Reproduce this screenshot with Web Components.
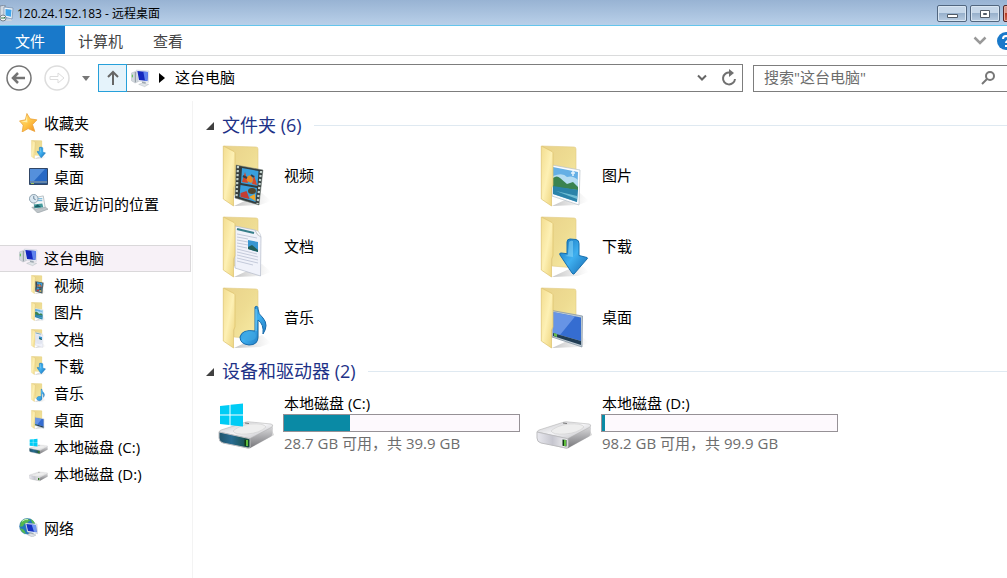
<!DOCTYPE html>
<html lang="zh-CN">
<head>
<meta charset="UTF-8">
<title>120.24.152.183 - 远程桌面</title>
<style>
    html, body {
        margin: 0;
        height: 100%;
    }

    body {
        font-family: "Open Sans", "Noto Sans CJK SC", sans-serif;
        font-size: 15px;
        color: #000;
        background: #fff;
        overflow-x: hidden;
    }
</style>
</head>
<body>
<explorer-window>
    <title-bar slot="title">120.24.152.183 - 远程桌面</title-bar>
    <ribbon-tabs slot="ribbon"></ribbon-tabs>
    <address-bar slot="address" location="这台电脑"></address-bar>

    <tree-item slot="tree" icon="star">收藏夹</tree-item>
    <tree-item slot="tree" icon="download" child>下载</tree-item>
    <tree-item slot="tree" icon="screen" child>桌面</tree-item>
    <tree-item slot="tree" icon="recent" child>最近访问的位置</tree-item>
    <tree-item slot="tree" icon="computer" group selected>这台电脑</tree-item>
    <tree-item slot="tree" icon="video" child>视频</tree-item>
    <tree-item slot="tree" icon="picture" child>图片</tree-item>
    <tree-item slot="tree" icon="document" child>文档</tree-item>
    <tree-item slot="tree" icon="download" child>下载</tree-item>
    <tree-item slot="tree" icon="music" child>音乐</tree-item>
    <tree-item slot="tree" icon="desktop" child>桌面</tree-item>
    <tree-item slot="tree" icon="drive-c" child>本地磁盘 (C:)</tree-item>
    <tree-item slot="tree" icon="drive-d" child>本地磁盘 (D:)</tree-item>
    <tree-item slot="tree" icon="network" group>网络</tree-item>

    <item-group heading="文件夹 (6)">
        <folder-tile icon="video">视频</folder-tile>
        <folder-tile icon="picture">图片</folder-tile>
        <folder-tile icon="document">文档</folder-tile>
        <folder-tile icon="download">下载</folder-tile>
        <folder-tile icon="music">音乐</folder-tile>
        <folder-tile icon="desktop">桌面</folder-tile>
    </item-group>
    <item-group heading="设备和驱动器 (2)">
        <drive-tile icon="drive-c" used="28">本地磁盘 (C:)<span slot="space">28.7 GB 可用，共 39.9 GB</span></drive-tile>
        <drive-tile icon="drive-d" used="1">本地磁盘 (D:)<span slot="space">98.2 GB 可用，共 99.9 GB</span></drive-tile>
    </item-group>
</explorer-window>

<script>
    // Every folder shares the same back panel and front flap
    const folder = (content) => `
        <defs>
            <linearGradient id="back" x1="0" x2="1" y1="0" y2="1">
                <stop offset="0" stop-color="#e9d28a"/><stop offset=".5" stop-color="#eedc92"/><stop offset="1" stop-color="#f8eca6"/>
            </linearGradient>
            <linearGradient id="flap" x1="0" x2="1" y1="0" y2="1">
                <stop offset="0" stop-color="#f3dd90"/><stop offset=".5" stop-color="#fdf0b4"/><stop offset="1" stop-color="#ecd27a"/>
            </linearGradient>
            <linearGradient id="blue" x1="0" x2="1" y1="0" y2="1">
                <stop offset="0" stop-color="#1470b8"/><stop offset=".5" stop-color="#3fb0f0"/><stop offset="1" stop-color="#1668b0"/>
            </linearGradient>
            <linearGradient id="shade"><stop offset="0" stop-color="#888" stop-opacity=".5"/><stop offset="1" stop-color="#aaa" stop-opacity="0"/></linearGradient>
        </defs>
        <path d="M12 61 40 48 49 56 38 60z" fill="url(#shade)"/>
        <path d="M2 1 34 2q2 0 2 2V52L12 50V8z" fill="url(#back)" stroke="#e0cb84" stroke-width=".6"/>
        ${content}
        <path d="M1.300 1 12 6.500q1 .6 1 2V40l-1.500 3V61L1.300 54z" fill="url(#flap)" stroke="#dcc26c" stroke-width=".7"/>`;

    const drive = (front, content) => `
        <defs>
            <linearGradient id="top" x1="0" x2="1" y1="0" y2="1"><stop offset="0" stop-color="#c4c4c8"/><stop offset=".5" stop-color="#f5f5f7"/><stop offset="1" stop-color="#b8b8bc"/></linearGradient>
            <linearGradient id="side" x1="0" x2="0" y1="0" y2="1"><stop offset="0" stop-color="#dcdcde"/><stop offset="1" stop-color="#77777b"/></linearGradient>
            <linearGradient id="front">${front}</linearGradient>
        </defs>
        <path d="M3 39 31 46 56 32 54 27z" fill="#999" opacity=".4"/>
        <path d="M31 35 54 23q1 0 1 2l-1 7q0 1-2 2L32 45z" fill="url(#side)"/>
        <path d="M1 29q0-1 2-2L28 19q2-.6 5 0l20 2q3 .5 1 3L33 35q-1 1-3 .5z" fill="url(#top)" stroke="#aaa" stroke-width=".5"/>
        <path d="M15 28Q20 23 32 21 46 20 48 24 42 30 29 31 17 32 15 28z" fill="#eee" stroke="#ccc" stroke-width=".6"/>
        <path d="M27 20 31 20.500" stroke="#777" stroke-width="1.200"/>
        <path d="M1 29 31 35.500q1 .5 1 2V44q0 1-2 1L5 40q-4-1-4-5z" fill="url(#front)" stroke="#bdbdc0"/>
        <path d="M26.500 36.500 30.500 37v6.500l-4-.7z" fill="#103a16"/><path d="M29 37v6" stroke="#7bea4a" stroke-width="1.500"/>
        ${content}`;

    const icons = {
        video: ['0 0 49 62', folder(`
            <path d="M14 20 41 25 37 60 13 53z" fill="#333b3c" stroke="#76837d" stroke-width=".5"/>
            <path d="M16 21 14.500 53M39 26 35.500 59" stroke="#c3d2cc" stroke-width="2.200" stroke-dasharray="2.200 1.800"/>
            <path d="M20 23 36.500 26 35.500 41 19 38z" fill="#389fdd"/><path d="M18.500 40 35 43 33.500 57 17.500 52z" fill="#389fdd"/>
            <path d="M20 37 23 27 26 38zM30 39l2-9 3 10z" fill="#d64829"/><path d="M25 36a3 4 0 1 1 4 2z" fill="#e88925"/>
            <path d="M18.500 48l6-2 3 8-9-2z" fill="#c33d33"/><path d="M27 52l6-3 .5 7z" fill="#efa62a"/>
            <ellipse cx="30" cy="46" rx="4" ry="3" fill="#53462d"/><path d="M21 31l4 2M29 30l3 2" stroke="#313e4d" stroke-width="2"/>`)],
        picture: ['0 0 49 62', folder(`
            <path d="M12 20 40 25 39 60 12 51z" fill="#fbfcfe" stroke="#b8c1c8" stroke-width=".7"/>
            <path d="M13 22 38 27 37 57 13 49z" fill="#65afe5"/>
            <path d="M13 31q10-4 14 1 6-2 11 3v6L13 39z" fill="#b5dcf2"/>
            <path d="M13 33Q17 30 20 33l7 6 6-2 5 5v3L13 42z" fill="#3b8350"/>
            <path d="M13 41 38 45 37 57 13 49z" fill="#2b83a9"/><path d="M16 46 37 51v3z" fill="#6fbdd4"/>
            <path d="M31 28h4M33 26v5" stroke="#e6f4fb" stroke-width="1.500"/>`)],
        document: ['0 0 49 62', folder(`
            <path d="M13 10 33 14Q35 20 39 21L38.500 60 13 52z" fill="#f0f2fa" stroke="#b5bcca" stroke-width=".7"/>
            <path d="M33 14q5 1 6 7-4-2-6-7z" fill="#fff" stroke="#b5bcca" stroke-width=".6"/>
            <path d="M15 13 32 17" stroke="#377e8a" stroke-width="2"/>
            <path d="M15 18 35 22M15 21 26 23M15 24 26 26M15 27 26 29M15 30 25 32M15 33 35 38M15 36 36 41M15 39 36 44M15 42 36 47M15 45 31 49" stroke="#c4cada"/>
            <path d="M26 24 36 26v10l-10-3z" fill="#3896d1"/><path d="M26 31 30 29 36 34v2l-10-3z" fill="#235f58"/>`)],
        download: ['0 0 49 62', folder(`
            <path d="M27 26q0-3 3-3l6 .5q3 .5 3 4v12l8 2q1 .5 0 1.500L34 58q-1 .5-2-1L20 39q-1-2 1-2l6 .7z" fill="url(#blue)" stroke="#1770ae"/>
            <path d="M29 26q2-2 4-1v16l-8-1 3-1z" fill="#8dd9f9" opacity=".55"/>`)],
        music: ['0 0 49 62', folder(`
            <path d="M33 20q3-2 3 2 0 5 5 9 6 7 0 16 1-10-5-14V50q0 8-9 8-9-1-9-8 2-8 15-6z" fill="url(#blue)" stroke="#166aab"/>
            <ellipse cx="27" cy="49" rx="7" ry="5" fill="#41a8e2" opacity=".65"/>
            <path d="M34 22v22" stroke="#70c8f4" stroke-width="1.200"/>`)],
        desktop: ['0 0 49 62', folder(`
            <path d="M12 23.500 42.500 29 42 60 12 50z" fill="#becbd4" stroke="#7f8f9d" stroke-width=".7"/>
            <path d="M13 25 41 30.500V54L13 46z" fill="#356dd1"/><path d="M13 25 35 29.500 20 48 13 46z" fill="#82a9f0" opacity=".65"/>
            <path d="M13 46 41 54v4L13 49z" fill="#213d54"/><path d="M14 46l3 1v3l-3-1z" fill="#65b94c"/>`)],
        'drive-c': ['0 0 56 47', drive('<stop offset="0" stop-color="#20546b"/><stop offset=".4" stop-color="#286b91"/><stop offset="1" stop-color="#174b3e"/>',
            '<path d="M2 3 11.500 2v9.500H2zM12.500 1.800 25 .6v10.900H12.500zM2 12.500h9.500V22L2 21zM12.500 12.500H25v10.900l-12.500-1.200z" fill="#00ccf5"/>')],
        'drive-d': ['0 0 56 47', drive('<stop offset="0" stop-color="#e9e9ef"/><stop offset=".5" stop-color="#c6c6cf"/><stop offset="1" stop-color="#f4f4f5"/>', '')],
        computer: ['0 1 57 55', `
            <path d="M1 12 14 7 22 9 22 38 12 42 1 35z" fill="#d3d9de" stroke="#a3abb3"/>
            <path d="M13 9v31" stroke="#8b949c" stroke-width="3"/><path d="M4 17v8" stroke="#55c04a" stroke-width="3"/>
            <path d="M33 36 44 38 44 48 33 46z" fill="#9ea8b1"/>
            <path d="M23 46 34 42 53 46 41 53z" fill="#e1e5e9" stroke="#9aa3ab"/>
            <path d="M16 3 54 6 52 40 21 36z" fill="#edf0f6" stroke="#a9b3c1"/>
            <path d="M19 6 51 9 49 36 24 33z" fill="#1428bd"/><path d="M37 8 51 9 49 36 42 35z" fill="#5f83ee"/>`],
        network: ['0 0 57 57', `
            <circle cx="25" cy="25" r="24" fill="#2477bd" stroke="#8eafbf"/>
            <path d="M5 13Q15 0 28 3l6 5-7 3-3 7-8-1-4 8-9 1zM3 30l12 5 6 13q-15-4-18-18zM35 3q11 5 14 17l-9-4z" fill="#53b84d"/>
            <path d="M9 10Q18 2 27 5" stroke="#c9efbe" stroke-width="3" fill="none"/>
            <path d="M29 43 44 46 43 53 29 50z" fill="#9ea9b1"/><path d="M25 50 35 46 51 51 40 57z" fill="#dce1e5" stroke="#88929b"/>
            <path d="M19 15 54 18 56 47 25 42z" fill="#edf1f5" stroke="#98a7b7"/>
            <path d="M22 18 51 21 53 43 27 39z" fill="#1631c5"/><path d="M38 20 51 21 53 43 45 41z" fill="#7197ef"/>`],
        star: ['0 0 18 18', `
            <defs><linearGradient id="gold" x1="0" x2="1" y1="0" y2="1"><stop offset="0" stop-color="#ffe58a"/><stop offset=".5" stop-color="#ffc649"/><stop offset="1" stop-color="#f28a1e"/></linearGradient></defs>
            <path d="M7.500.5 10.500 5.500 17 6.500 12.800 11 15 17.500 8.600 14.800 3 18 4 11.500.5 7.500 6 6.500z" fill="url(#gold)" stroke="#e99f34" stroke-width=".7"/>
            <path d="M7.500 2.500 8 9 2.500 8 6.500 7.200z" fill="#fff0a9"/>`],
        screen: ['0 0 19 17', `
            <path d="M.5.5h18v16H.5z" fill="#2a568e" stroke="#314666"/><path d="M1 1h17v12H1z" fill="#2869c5"/>
            <path d="M1 1h15L5 13H1z" fill="#68a1e5" opacity=".7"/><path d="M1 14h17" stroke="#9eb5c8"/><path d="M2 15.500h3" stroke="#9ac55f"/>`],
        recent: ['0 0 20 20', `
            <path d="M3 14 15 12 20 16 9 20z" fill="#bdc4c8" stroke="#8d969d" stroke-width=".6"/>
            <path d="M5 4 15 2 17 14 6 16z" fill="#f4f7f8" stroke="#9ba7ad" stroke-width=".7"/>
            <path d="M8 5h6M8 7h6" stroke="#58a8d2"/><path d="M5 11 14 10l1 4-9 1z" fill="#459a9c"/><path d="M5 14l4-3 4 3z" fill="#195b65"/>
            <circle cx="5" cy="5" r="4.500" fill="#dce9f2" stroke="#899dab"/><path d="M5 2v3l2 1" stroke="#46647d" fill="none" stroke-width=".8"/>`],
        remote: ['0 0 14 17', `
            <path d="M0 1 5 0v13l-5-1z" fill="#d3dbe4" stroke="#68768a" stroke-width=".7"/>
            <path d="M4 2 13 3l-1 11-8-2z" fill="#eff4f9" stroke="#718ba9" stroke-width=".7"/><path d="M5.500 4l6 .7-.5 7-5.500-1.200z" fill="#3fa5ec"/>
            <path d="M8 14 11 14l1 2H5z" fill="#cdd6de"/>
            <circle cx="3" cy="13" r="3" fill="#f3f6f7" stroke="#78838c"/><path d="M1 13h4l-1-1" stroke="#347a44" fill="none"/>`]
    };

    class AppIcon extends HTMLElement {
        constructor() {
            super();
            this.attachShadow({ mode: 'open' });
        }

        connectedCallback() {
            const [viewBox, shapes] = icons[this.getAttribute('name')];
            this.shadowRoot.innerHTML = `
                <style>
                    :host { display: block; flex: none; width: 18px; height: 20px; }
                    svg { display: block; width: 100%; height: 100%; }
                </style>
                <svg viewBox="${viewBox}" fill="none" aria-hidden="true">${shapes}</svg>
            `;
        }
    }

    class TitleBar extends HTMLElement {
        constructor() {
            super();
            this.attachShadow({ mode: 'open' });
            this.shadowRoot.innerHTML = `
                <style>
                    :host {
                        display: flex;
                        height: 25px;
                        border-bottom: 1px solid #65c5ec;
                        background: linear-gradient(#98b3d3, #b9d0e9);
                        font-size: 12px;
                        overflow: hidden;
                    }

                    app-icon { width: 14px; height: 17px; margin-top: 5px; }
                    .title { flex: 1; padding-left: 3px; line-height: 28px; white-space: nowrap; }
                    .buttons { display: flex; gap: 3px; margin: 5px -42px 0 0; }

                    button {
                        display: flex;
                        align-items: center;
                        justify-content: center;
                        box-sizing: border-box;
                        width: 30px;
                        height: 17px;
                        padding: 0;
                        border: 1px solid #51667f;
                        border-radius: 2px;
                        background: linear-gradient(#c6d7e9 45%, #98b1cc 50%, #b9cde2);
                        box-shadow: inset 0 0 0 1px #d8e5f2;
                    }

                    .close {
                        width: 46px;
                        border-color: #54282b;
                        background: linear-gradient(#d89689 45%, #b83922 50%, #ce684e);
                        box-shadow: inset 0 0 0 1px #e6aaa0;
                    }
                </style>
                <app-icon name="remote"></app-icon>
                <span class="title"><slot></slot></span>
                <div class="buttons">
                    <button aria-label="最小化"><svg width="12" height="12"><path d="M1.500 6.500h10v3h-10z" fill="#fff" stroke="#505a66"/></svg></button>
                    <button aria-label="还原"><svg width="12" height="10"><path d="M1.500 1.500h9v7h-9zM4.500 4.500h3v1h-3z" fill="#fff" stroke="#505a66" fill-rule="evenodd"/></svg></button>
                    <button class="close" aria-label="关闭"><svg width="12" height="10"><path d="M2 1l8 8M10 1L2 9" stroke="#fff" stroke-width="2"/></svg></button>
                </div>
            `;
        }
    }

    class RibbonTabs extends HTMLElement {
        constructor() {
            super();
            this.attachShadow({ mode: 'open' });
            this.shadowRoot.innerHTML = `
                <style>
                    :host {
                        display: flex;
                        align-items: center;
                        height: 29px;
                        border-bottom: 1px solid #dadbdc;
                        overflow: hidden;
                    }

                    button { padding: 0; border: 0; background: none; font: inherit; color: #444; }
                    .tab { height: 28px; padding: 0 15px; line-height: 30px; align-self: flex-start; }
                    .tab.file { padding-right: 20px; margin-right: -2px; background: #1979ca; color: #fff; }
                    .expand { margin-left: auto; }
                    .help { margin: 0 -8px 0 10px; }
                    svg { display: block; }
                </style>
                <button class="tab file">文件</button>
                <button class="tab">计算机</button>
                <button class="tab">查看</button>
                <button class="expand" aria-label="展开功能区"><svg width="14" height="10"><path d="M1.500 1.500 7 7l5.500-5.500" fill="none" stroke="#999" stroke-width="2.500"/></svg></button>
                <button class="help" aria-label="帮助"><svg width="18" height="18"><circle cx="9" cy="9" r="9" fill="#1979ca"/><path d="M6 7q0-3 3-3t3 2.500q0 1.500-1.500 2.300T9 11M9 13v2" fill="none" stroke="#fff" stroke-width="2"/></svg></button>
            `;
        }
    }

    class AddressBar extends HTMLElement {
        constructor() {
            super();
            this.attachShadow({ mode: 'open' });
        }

        connectedCallback() {
            const location = this.getAttribute('location');
            this.shadowRoot.innerHTML = `
                <style>
                    :host { display: flex; align-items: center; height: 28px; padding: 8px 0 8px 6px; }
                    button { display: flex; padding: 0; border: 0; background: none; font: inherit; color: inherit; }
                    svg { display: block; flex: none; }
                    .forward { margin-left: 12px; }
                    .history { margin: 0 8px 0 12px; }

                    .up {
                        box-sizing: border-box;
                        width: 29px;
                        height: 28px;
                        align-items: center;
                        justify-content: center;
                        border: 1px solid #26a0da;
                        background: #e5f3fb;
                    }

                    .path, .search {
                        display: flex;
                        align-items: center;
                        box-sizing: border-box;
                        height: 28px;
                        border: 1px solid #7d7d7d;
                        min-width: 0;
                    }

                    .path { flex: 1; border-left: 0; padding: 0 5px 0 4px; }
                    .path app-icon { width: 19px; height: 19px; }
                    .arrow { margin: 0 10px 0 9px; }
                    .crumb { padding-bottom: 3px; }
                    .drop { margin: 0 14px 0 auto; }

                    .search {
                        flex: 0 1 254px;
                        height: 27px;
                        margin-left: 10px;
                        padding: 0 11px 0 10px;
                        border-right: 0;
                    }

                    input {
                        flex: 1;
                        min-width: 0;
                        padding: 0 0 2px;
                        border: 0;
                        outline: 0;
                        background: none;
                        font: inherit;
                    }

                    input::placeholder { color: #6d6d6d; opacity: 1; }
                </style>
                <button aria-label="返回"><svg width="26" height="26" fill="none" stroke="#747474"><circle cx="13" cy="13" r="12" stroke-width="1.500"/><path d="M7 13h12M12 8l-5 5 5 5" stroke-width="2.500"/></svg></button>
                <button class="forward" aria-label="前进"><svg width="26" height="26" fill="none" stroke="#ddd"><circle cx="13" cy="13" r="12" stroke-width="1.500"/><path d="M6 11.500h8V8l6 5-6 5v-3.500H6z"/></svg></button>
                <button class="history" aria-label="最近位置"><svg width="8" height="5"><path d="M0 0h8L4 5z" fill="#777"/></svg></button>
                <button class="up" aria-label="向上"><svg width="14" height="16" fill="none" stroke="#666"><path d="M7 15V2M2 7l5-5 5 5" stroke-width="2"/></svg></button>
                <div class="path">
                    <app-icon name="computer"></app-icon>
                    <svg class="arrow" width="6" height="10"><path d="M0 0 6 5 0 10z"/></svg>
                    <button class="crumb">${location}</button>
                    <button class="drop" aria-label="以前的位置"><svg width="10" height="8"><path d="M1 1.500l4 4 4-4" fill="none" stroke="#666" stroke-width="2"/></svg></button>
                    <button aria-label="刷新"><svg width="16" height="18" fill="none" stroke="#707070" stroke-width="2"><path d="M9 3.500A6 6 0 1 0 14 10"/><path d="M8 0l5 4-5 4z" fill="#707070" stroke="none"/></svg></button>
                </div>
                <label class="search">
                    <input type="search" placeholder='搜索"${location}"' aria-label='搜索"${location}"'>
                    <svg width="15" height="14" fill="none" stroke="#777" stroke-width="2"><circle cx="9" cy="5" r="4"/><path d="M6 8 1 13"/></svg>
                </label>
            `;
        }
    }

    class TreeItem extends HTMLElement {
        constructor() {
            super();
            this.attachShadow({ mode: 'open' });
        }

        connectedCallback() {
            this.shadowRoot.innerHTML = `
                <style>
                    :host { display: block; }
                    :host([group]) { margin-top: 27px; }

                    a {
                        display: flex;
                        align-items: center;
                        gap: 6px;
                        box-sizing: border-box;
                        height: 27px;
                        padding: 0 0 2px 19px;
                        border: 1px solid transparent;
                        border-left: 0;
                        color: inherit;
                        text-decoration: none;
                        white-space: nowrap;
                    }

                    app-icon { width: 19px; height: 19px; }
                    :host([child]) a { padding-left: 29px; }
                    :host([selected]) a { background: #f7f1f7; border-color: #dad8da; }
                </style>
                <a href="#"><app-icon name="${this.getAttribute('icon')}"></app-icon><slot></slot></a>
            `;
        }
    }

    class ItemGroup extends HTMLElement {
        constructor() {
            super();
            this.attachShadow({ mode: 'open' });
        }

        connectedCallback() {
            this.shadowRoot.innerHTML = `
                <style>
                    :host { display: block; }

                    h2 {
                        display: flex;
                        align-items: center;
                        margin: 0;
                        height: 33px;
                        font-size: 18px;
                        font-weight: normal;
                        color: #1e3287;
                        white-space: nowrap;
                    }

                    h2::after { content: ""; flex: 1; height: 1px; margin-left: 12px; background: #dfe9f1; }
                    span { padding-bottom: 4px; }
                    svg { margin-right: 8px; }
                    .items { display: grid; grid-template-columns: repeat(auto-fill, 318px); padding-left: 12px; }
                </style>
                <h2><svg width="8" height="8"><path d="M8 0v8H0z" fill="#404040"/></svg><span>${this.getAttribute('heading')}</span></h2>
                <div class="items"><slot></slot></div>
            `;
        }
    }

    class FolderTile extends HTMLElement {
        constructor() {
            super();
            this.attachShadow({ mode: 'open' });
        }

        connectedCallback() {
            this.shadowRoot.innerHTML = `
                <style>
                    :host { display: flex; align-items: flex-start; height: 71px; padding-left: 4px; }
                    app-icon { width: 49px; height: 62px; margin: 3px 13px 0 0; }
                    span { line-height: 66px; }
                </style>
                <app-icon name="${this.getAttribute('icon')}"></app-icon>
                <span><slot></slot></span>
            `;
        }
    }

    class DriveTile extends HTMLElement {
        constructor() {
            super();
            this.attachShadow({ mode: 'open' });
        }

        connectedCallback() {
            this.shadowRoot.innerHTML = `
                <style>
                    :host { display: flex; align-items: flex-start; padding-top: 4px; line-height: 22px; }
                    app-icon { width: 56px; height: 47px; margin: 11px 9px 0 0; }
                    .info { width: 237px; }

                    .bar {
                        box-sizing: border-box;
                        height: 18px;
                        border: 1px solid #969196;
                        background: #fdf9fd;
                    }

                    .used { height: 100%; min-width: 3px; width: ${this.getAttribute('used')}%; background: #0a8aa5; }
                    .space { color: #6d6d6d; }
                    .name, .space { padding-left: 1px; }
                </style>
                <app-icon name="${this.getAttribute('icon')}"></app-icon>
                <div class="info">
                    <div class="name"><slot></slot></div>
                    <div class="bar"><div class="used"></div></div>
                    <div class="space"><slot name="space"></slot></div>
                </div>
            `;
        }
    }

    class ExplorerWindow extends HTMLElement {
        constructor() {
            super();
            this.attachShadow({ mode: 'open' });
            this.shadowRoot.innerHTML = `
                <style>
                    :host { display: flex; flex-direction: column; min-height: 100%; }
                    .body { display: flex; flex: 1; }
                    nav { flex: 0 0 191px; margin-top: 1px; padding: 9px 1px 12px 0; border-right: 1px solid #f3f3f3; }
                    main { flex: 1; min-width: 0; padding: 9px 0 0 13px; }
                </style>
                <slot name="title"></slot>
                <slot name="ribbon"></slot>
                <slot name="address"></slot>
                <div class="body">
                    <nav><slot name="tree"></slot></nav>
                    <main><slot></slot></main>
                </div>
            `;
        }
    }

    // Define the custom elements
    customElements.define('app-icon', AppIcon);
    customElements.define('title-bar', TitleBar);
    customElements.define('ribbon-tabs', RibbonTabs);
    customElements.define('address-bar', AddressBar);
    customElements.define('tree-item', TreeItem);
    customElements.define('item-group', ItemGroup);
    customElements.define('folder-tile', FolderTile);
    customElements.define('drive-tile', DriveTile);
    customElements.define('explorer-window', ExplorerWindow);
</script>
</body>
</html>
